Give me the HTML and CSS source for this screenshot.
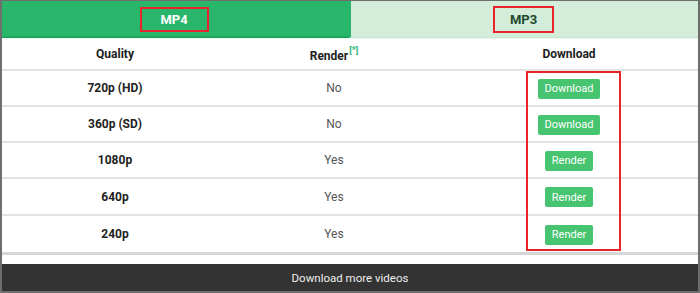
FILE: index.html
```html
<!DOCTYPE html>
<html lang="en">
<head>
    <meta charset="UTF-8">
    <title>Video Downloader</title>
    <link rel="stylesheet" href="styles.css">
</head>
<body>
    <div class="frame">
        <div class="tabs">
            <div class="tab active"><span class="mark-box mp4">MP4</span></div>
            <div class="tab"><span class="mark-box mp3">MP3</span></div>
        </div>
        <div class="table">
            <div class="row head">
                <div class="cell">Quality</div>
                <div class="cell">Render<sup class="star">[*]</sup></div>
                <div class="cell">Download</div>
            </div>
            <div class="body">
                <div class="row">
                    <div class="cell quality">720p (HD)</div>
                    <div class="cell render">No</div>
                    <div class="cell"><button class="btn">Download</button></div>
                </div>
                <div class="row">
                    <div class="cell quality">360p (SD)</div>
                    <div class="cell render">No</div>
                    <div class="cell"><button class="btn">Download</button></div>
                </div>
                <div class="row">
                    <div class="cell quality">1080p</div>
                    <div class="cell render">Yes</div>
                    <div class="cell"><button class="btn">Render</button></div>
                </div>
                <div class="row tall">
                    <div class="cell quality">640p</div>
                    <div class="cell render">Yes</div>
                    <div class="cell"><button class="btn">Render</button></div>
                </div>
                <div class="row last">
                    <div class="cell quality">240p</div>
                    <div class="cell render">Yes</div>
                    <div class="cell"><button class="btn">Render</button></div>
                </div>
                <div class="col-mark"></div>
            </div>
        </div>
        <div class="footer">Download more videos</div>
    </div>
</body>
</html>
```

FILE: styles.css
```css
body {
    margin: 0;
    font-family: Roboto, "Liberation Sans", Arial, sans-serif;
    background-color: #fff;
}
.frame {
    width: 700px;
    height: 293px;
    box-sizing: border-box;
    border: 2px solid #6e6e6e;
    border-top-width: 1px;
    display: flex;
    flex-direction: column;
}
.tabs {
    display: flex;
    height: 37px;
}
.tab {
    flex: 1;
    display: flex;
    justify-content: center;
    align-items: center;
    background-color: #d4ecda;
    border-bottom: 1px solid #c4e6cd;
    border-left: 2px solid #29b66b;
    color: #1e4a2c;
    font-size: 13px;
    font-weight: bold;
}
.tab.active {
    background-color: #29b66b;
    border-bottom: 2px solid #1fa75c;
    border-left: none;
    color: #fff;
}
.mark-box {
    border: 2px solid #e8232b;
    display: flex;
    justify-content: center;
    align-items: center;
    box-sizing: border-box;
}
.mark-box.mp4 {
    width: 69px;
    height: 25px;
    margin: 1px 3px 0 0;
}
.mark-box.mp3 {
    width: 61px;
    height: 27px;
    margin-right: 2px;
}
.table {
    display: flex;
    flex-direction: column;
}
.row {
    display: grid;
    grid-template-columns: 226px 212px 1fr;
    height: 36px;
    box-sizing: border-box;
    border-bottom: 2px solid #e3e3e3;
    align-items: center;
}
.row.head {
    height: 33px;
    border-top: 1px solid #eef7f1;
    font-weight: bold;
    font-size: 12px;
    color: #222;
}
.row.tall {
    height: 37px;
}
.row.last {
    height: 39px;
    border-bottom: 3px solid #d6d6d6;
}
.cell {
    text-align: center;
}
.star {
    color: #2bb673;
    font-size: 9px;
    font-weight: bold;
    vertical-align: 7px;
    margin-left: 1px;
}
.quality {
    font-weight: bold;
    font-size: 12px;
    color: #222;
}
.render {
    font-size: 12px;
    color: #555;
}
.btn {
    background-color: #47c470;
    color: #fff;
    border: none;
    border-radius: 2px;
    font-family: inherit;
    font-size: 11px;
    height: 20px;
    padding: 0 7px;
    cursor: pointer;
}
.body {
    position: relative;
}
.col-mark {
    position: absolute;
    left: 524px;
    top: 0;
    width: 95px;
    height: 180px;
    border: 2px solid #e8232b;
    box-sizing: border-box;
    pointer-events: none;
}
.footer {
    margin-top: auto;
    height: 27px;
    background-color: #333;
    color: #eee;
    font-size: 11.5px;
    display: flex;
    justify-content: center;
    align-items: center;
}
```
